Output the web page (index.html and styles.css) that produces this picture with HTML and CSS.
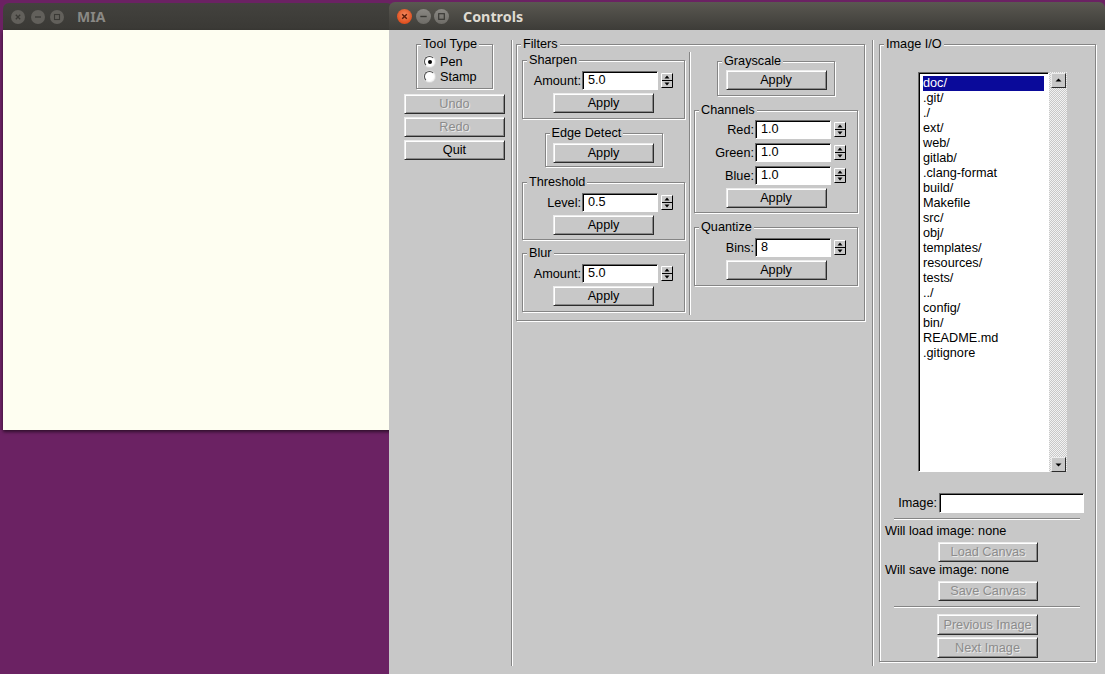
FILE: index.html
```html
<!DOCTYPE html>
<html>
<head>
<meta charset="utf-8">
<title>MIA Controls</title>
<link rel="stylesheet" href="styles.css">
</head>
<body>
<div class="desktop">
  <div class="window mia">
    <div class="titlebar">
      <div class="wbtns">
        <span class="wb"><svg width="14" height="14" viewBox="0 0 14 14"><path d="M4.8 4.8L9.2 9.2M9.2 4.8L4.8 9.2" stroke="#3a3935" stroke-width="1.3"/></svg></span>
        <span class="wb"><svg width="14" height="14" viewBox="0 0 14 14"><path d="M4 7H10" stroke="#3a3935" stroke-width="1.3"/></svg></span>
        <span class="wb"><svg width="14" height="14" viewBox="0 0 14 14"><rect x="4.5" y="4.5" width="5" height="5" fill="none" stroke="#3a3935" stroke-width="1.1"/></svg></span>
      </div>
      <span class="wtitle">MIA</span>
    </div>
    <div class="canvas"></div>
  </div>

  <div class="window controls">
    <div class="titlebar">
      <div class="wbtns">
        <span class="wb close"><svg width="15" height="15" viewBox="0 0 15 15"><path d="M5.2 5.2L9.8 9.8M9.8 5.2L5.2 9.8" stroke="#5a1a08" stroke-width="1.4"/></svg></span>
        <span class="wb"><svg width="15" height="15" viewBox="0 0 15 15"><path d="M4.3 7.5H10.7" stroke="#3a3935" stroke-width="1.4"/></svg></span>
        <span class="wb"><svg width="15" height="15" viewBox="0 0 15 15"><rect x="4.7" y="4.7" width="5.6" height="5.6" fill="none" stroke="#3a3935" stroke-width="1.2"/></svg></span>
      </div>
      <span class="wtitle">Controls</span>
    </div>

    <div class="panel">
      <div class="col-tools">
        <div class="group tooltype">
          <span class="legend">Tool Type</span>
          <div class="radio"><span class="rb on"></span>Pen</div>
          <div class="radio"><span class="rb"></span>Stamp</div>
        </div>
        <div class="btnstack">
          <div class="btn disabled">Undo</div>
          <div class="btn disabled">Redo</div>
          <div class="btn">Quit</div>
        </div>
      </div>

      <div class="vsep"></div>

      <div class="group filters">
        <span class="legend">Filters</span>
        <div class="fcol left">
          <div class="group sub sharpen">
            <span class="legend">Sharpen</span>
            <div class="field"><span class="flabel">Amount:</span><span class="input">5.0</span>
              <svg class="spin" width="12" height="15" viewBox="0 0 12 15"><rect width="12" height="15" fill="#c8c8c8"/><path d="M0.5 14.5V0.5H11.5" stroke="#fff" fill="none"/><path d="M0.5 14.5H11.5V0.5" stroke="#000" fill="none"/><path d="M1 7.5H11" stroke="#000"/><path d="M6 2.5L8.5 5.5H3.5Z" fill="#000"/><path d="M3.5 9.5H8.5L6 12.5Z" fill="#000"/></svg>
            </div>
            <div class="btn apply">Apply</div>
          </div>
          <div class="group sub edge">
            <span class="legend">Edge Detect</span>
            <div class="btn apply">Apply</div>
          </div>
          <div class="group sub threshold">
            <span class="legend">Threshold</span>
            <div class="field"><span class="flabel">Level:</span><span class="input">0.5</span>
              <svg class="spin" width="12" height="15" viewBox="0 0 12 15"><rect width="12" height="15" fill="#c8c8c8"/><path d="M0.5 14.5V0.5H11.5" stroke="#fff" fill="none"/><path d="M0.5 14.5H11.5V0.5" stroke="#000" fill="none"/><path d="M1 7.5H11" stroke="#000"/><path d="M6 2.5L8.5 5.5H3.5Z" fill="#000"/><path d="M3.5 9.5H8.5L6 12.5Z" fill="#000"/></svg>
            </div>
            <div class="btn apply">Apply</div>
          </div>
          <div class="group sub blur">
            <span class="legend">Blur</span>
            <div class="field"><span class="flabel">Amount:</span><span class="input">5.0</span>
              <svg class="spin" width="12" height="15" viewBox="0 0 12 15"><rect width="12" height="15" fill="#c8c8c8"/><path d="M0.5 14.5V0.5H11.5" stroke="#fff" fill="none"/><path d="M0.5 14.5H11.5V0.5" stroke="#000" fill="none"/><path d="M1 7.5H11" stroke="#000"/><path d="M6 2.5L8.5 5.5H3.5Z" fill="#000"/><path d="M3.5 9.5H8.5L6 12.5Z" fill="#000"/></svg>
            </div>
            <div class="btn apply">Apply</div>
          </div>
        </div>

        <div class="fsep"></div>

        <div class="fcol right">
          <div class="group sub gray">
            <span class="legend">Grayscale</span>
            <div class="btn apply">Apply</div>
          </div>
          <div class="group sub channels">
            <span class="legend">Channels</span>
            <div class="field"><span class="flabel">Red:</span><span class="input">1.0</span>
              <svg class="spin" width="12" height="15" viewBox="0 0 12 15"><rect width="12" height="15" fill="#c8c8c8"/><path d="M0.5 14.5V0.5H11.5" stroke="#fff" fill="none"/><path d="M0.5 14.5H11.5V0.5" stroke="#000" fill="none"/><path d="M1 7.5H11" stroke="#000"/><path d="M6 2.5L8.5 5.5H3.5Z" fill="#000"/><path d="M3.5 9.5H8.5L6 12.5Z" fill="#000"/></svg>
            </div>
            <div class="field"><span class="flabel">Green:</span><span class="input">1.0</span>
              <svg class="spin" width="12" height="15" viewBox="0 0 12 15"><rect width="12" height="15" fill="#c8c8c8"/><path d="M0.5 14.5V0.5H11.5" stroke="#fff" fill="none"/><path d="M0.5 14.5H11.5V0.5" stroke="#000" fill="none"/><path d="M1 7.5H11" stroke="#000"/><path d="M6 2.5L8.5 5.5H3.5Z" fill="#000"/><path d="M3.5 9.5H8.5L6 12.5Z" fill="#000"/></svg>
            </div>
            <div class="field"><span class="flabel">Blue:</span><span class="input">1.0</span>
              <svg class="spin" width="12" height="15" viewBox="0 0 12 15"><rect width="12" height="15" fill="#c8c8c8"/><path d="M0.5 14.5V0.5H11.5" stroke="#fff" fill="none"/><path d="M0.5 14.5H11.5V0.5" stroke="#000" fill="none"/><path d="M1 7.5H11" stroke="#000"/><path d="M6 2.5L8.5 5.5H3.5Z" fill="#000"/><path d="M3.5 9.5H8.5L6 12.5Z" fill="#000"/></svg>
            </div>
            <div class="btn apply">Apply</div>
          </div>
          <div class="group sub quantize">
            <span class="legend">Quantize</span>
            <div class="field"><span class="flabel">Bins:</span><span class="input">8</span>
              <svg class="spin" width="12" height="15" viewBox="0 0 12 15"><rect width="12" height="15" fill="#c8c8c8"/><path d="M0.5 14.5V0.5H11.5" stroke="#fff" fill="none"/><path d="M0.5 14.5H11.5V0.5" stroke="#000" fill="none"/><path d="M1 7.5H11" stroke="#000"/><path d="M6 2.5L8.5 5.5H3.5Z" fill="#000"/><path d="M3.5 9.5H8.5L6 12.5Z" fill="#000"/></svg>
            </div>
            <div class="btn apply">Apply</div>
          </div>
        </div>
      </div>

      <div class="vsep second"></div>

      <div class="group imageio">
        <span class="legend">Image I/O</span>
        <div class="browser">
          <div class="list">
            <div class="item sel">doc/</div>
            <div class="item">.git/</div>
            <div class="item">./</div>
            <div class="item">ext/</div>
            <div class="item">web/</div>
            <div class="item">gitlab/</div>
            <div class="item">.clang-format</div>
            <div class="item">build/</div>
            <div class="item">Makefile</div>
            <div class="item">src/</div>
            <div class="item">obj/</div>
            <div class="item">templates/</div>
            <div class="item">resources/</div>
            <div class="item">tests/</div>
            <div class="item">../</div>
            <div class="item">config/</div>
            <div class="item">bin/</div>
            <div class="item">README.md</div>
            <div class="item">.gitignore</div>
          </div>
          <div class="scrollbar">
            <div class="sbtn"><svg width="15" height="15" viewBox="0 0 15 15"><path d="M7.5 5.5L10.5 8.5H4.5Z" fill="#000"/></svg></div>
            <div class="sbtn"><svg width="15" height="15" viewBox="0 0 15 15"><path d="M4.5 6.5H10.5L7.5 9.5Z" fill="#000"/></svg></div>
          </div>
        </div>
        <div class="imgrow"><span class="imglabel">Image:</span><span class="input wide"></span></div>
        <div class="hsep"></div>
        <div class="note">Will load image: none</div>
        <div class="btn disabled io">Load Canvas</div>
        <div class="note tight">Will save image: none</div>
        <div class="btn disabled io">Save Canvas</div>
        <div class="hsep"></div>
        <div class="btn disabled io nav first">Previous Image</div>
        <div class="btn disabled io nav">Next Image</div>
      </div>
    </div>
  </div>
</div>
</body>
</html>
```

FILE: styles.css
```css
* { box-sizing: border-box; }

html, body {
  margin: 0;
  padding: 0;
}

body {
  width: 1105px;
  height: 674px;
  overflow: hidden;
  background: #6b2263;
  font-family: "Liberation Sans", Arial, sans-serif;
  font-size: 12.7px;
  color: #000;
}

.desktop {
  position: relative;
  width: 1105px;
  height: 674px;
  overflow: hidden;
}

.window { position: absolute; }

/* ---------- title bars ---------- */
.titlebar {
  display: flex;
  align-items: center;
  border-radius: 6px 6px 0 0;
}

.wbtns {
  display: flex;
  align-items: center;
}

.wb {
  display: flex;
  border-radius: 50%;
}

.wtitle {
  font-family: "Noto Sans", "Open Sans", sans-serif;
  font-weight: bold;
  font-size: 14.3px;
}

/* MIA window */
.mia {
  left: 3px;
  top: 3px;
  width: 390px;
}

.mia .titlebar {
  height: 27px;
  background: linear-gradient(#43423e, #3a3935);
  padding-left: 8px;
}

.mia .wb {
  width: 14px;
  height: 14px;
  background: #62605b;
  margin-right: 6px;
}
.mia .wb:nth-child(2) { margin-right: 5px; }
.mia .wb:last-child { margin-right: 0; }

.mia .wtitle {
  margin-left: 13px;
  color: #8a8985;
  font-size: 14px;
}

.canvas {
  height: 400px;
  background: #fefef1;
  box-shadow: 0 2px 3px rgba(0, 0, 0, 0.55);
}

/* Controls window */
.controls {
  left: 389px;
  top: 2px;
  width: 716px;
  height: 672px;
}

.controls .titlebar {
  height: 28px;
  background: linear-gradient(#5a5851, #3d3c38);
  padding-left: 8px;
}

.controls .wb {
  width: 15px;
  height: 15px;
  background: linear-gradient(#8a8883, #6e6c67);
  margin-right: 3px;
}
.controls .wb.close {
  background: radial-gradient(circle at 50% 40%, #f48a5f, #e0501f 70%, #c8431a);
  margin-right: 4px;
}
.controls .wb:last-child { margin-right: 0; }

.controls .wtitle {
  margin-left: 14px;
  color: #dfdbd2;
}

/* ---------- panel ---------- */
.panel {
  display: flex;
  align-items: flex-start;
  height: 644px;
  background: #c8c8c8;
}

.group {
  position: relative;
  border: 1px solid #858585;
  box-shadow: inset 1px 1px 0 #fff, 1px 1px 0 #fff;
}

.legend {
  position: absolute;
  top: -8px;
  left: 4px;
  padding: 0 2px;
  line-height: 14px;
  background: #c8c8c8;
  white-space: nowrap;
}

.vsep {
  flex: none;
  width: 2px;
  height: 626px;
  margin-top: 10px;
  border-left: 1px solid #858585;
  border-right: 1px solid #fff;
}

.vsep.second { margin-left: 7px; }

/* tool column */
.col-tools {
  flex: none;
  width: 122px;
  padding-top: 14px;
}

.tooltype {
  margin-left: 27px;
  width: 77px;
  height: 45px;
  padding: 9px 0 0 7px;
}

.radio {
  display: flex;
  align-items: center;
  height: 15px;
}

.rb {
  position: relative;
  width: 11px;
  height: 11px;
  margin-right: 5px;
  border-radius: 50%;
  background: #fff;
  border: 1px solid;
  border-color: #4a4a4a #f4f4f4 #f4f4f4 #4a4a4a;
  box-shadow: 0 0 0 1px #d8d8d8;
}

.rb.on::after {
  content: "";
  position: absolute;
  left: 2.5px;
  top: 2.5px;
  width: 4px;
  height: 4px;
  border-radius: 50%;
  background: #000;
}

.btnstack {
  margin: 5px 0 0 15px;
  width: 101px;
  display: flex;
  flex-direction: column;
  gap: 3px;
}

/* buttons */
.btn {
  height: 20px;
  display: flex;
  align-items: center;
  justify-content: center;
  background: #c8c8c8;
  border: 1px solid;
  border-color: #ececec #2c2c2c #2c2c2c #ececec;
  box-shadow: inset 1px 1px 0 #fff, inset -1px -1px 0 #8a8a8a;
  white-space: nowrap;
}

.btn.disabled {
  color: #8c8c8c;
  text-shadow: 1px 1px 0 #e9e9e9;
}

/* filters */
.filters {
  flex: none;
  display: flex;
  align-items: flex-start;
  margin: 14px 0 0 3px;
  width: 349px;
  height: 277px;
}

.fcol.left {
  margin-left: 5px;
  width: 163px;
}

.fsep {
  flex: none;
  width: 2px;
  height: 263px;
  margin: 7px 0 0 4px;
  border-left: 1px solid #858585;
  border-right: 1px solid #fff;
}

.fcol.right {
  margin-left: 3px;
  width: 164px;
}

.sub { padding-top: 10px; }

.sharpen { margin-top: 15px; height: 59px; }
.edge { margin: 14px auto 0; width: 118px; height: 34px; padding-top: 9px; }
.threshold { margin-top: 15px; height: 58px; }
.blur { margin-top: 13px; height: 59px; }

.gray { margin: 16px auto 0; width: 118px; height: 35px; padding-top: 8px; }
.channels { margin-top: 14px; height: 103px; padding-top: 9px; }
.quantize { margin-top: 14px; height: 59px; }

.field {
  display: flex;
  align-items: center;
  height: 19px;
}

.channels .field + .field { margin-top: 4px; }

.flabel {
  width: 58px;
  margin-right: 1px;
  text-align: right;
}

.fcol.right .flabel { width: 59px; }

.input {
  width: 76px;
  height: 19px;
  line-height: 17px;
  padding-left: 5px;
  background: #fff;
  border: 1px solid;
  border-color: #6a6a6a #fff #fff #6a6a6a;
  box-shadow: inset 1px 1px 0 #000;
}

.spin {
  display: block;
  margin-left: 3px;
  flex: none;
}

.apply {
  width: 101px;
  margin: 3px auto 0;
}

.edge .apply, .gray .apply { margin-top: 0; }

/* image i/o */
.imageio {
  flex: none;
  margin: 14px 0 0 5px;
  width: 217px;
  height: 618px;
}

.browser {
  display: flex;
  height: 400px;
  margin: 27px 0 0 38px;
}

.list {
  width: 131px;
  height: 400px;
  padding: 3px 0 0 4px;
  background: #fff;
  border: 1px solid;
  border-color: #6a6a6a #fff #fff #6a6a6a;
  box-shadow: inset 1px 1px 0 #000;
}

.item {
  width: 121px;
  height: 15px;
  line-height: 15px;
  white-space: nowrap;
}

.item.sel {
  background: #0a0a9a;
  color: #fff;
}

.scrollbar {
  width: 18px;
  height: 400px;
  padding: 1px 1px 0 2px;
  display: flex;
  flex-direction: column;
  justify-content: space-between;
  background: repeating-conic-gradient(#f2f2f2 0 25%, #c8c8c8 0 50%) 0 0 / 2px 2px;
}

.sbtn {
  width: 15px;
  height: 15px;
  display: flex;
  background: #c8c8c8;
  border: 1px solid;
  border-color: #ececec #2c2c2c #2c2c2c #ececec;
}
.sbtn svg { margin: -1px; }

.imgrow {
  display: flex;
  align-items: center;
  height: 20px;
  margin-top: 21px;
}

.imglabel {
  width: 57px;
  margin-right: 2px;
  text-align: right;
}

.input.wide {
  width: 145px;
  height: 20px;
}

.hsep {
  width: 186px;
  height: 2px;
  margin: 5px 0 0 14px;
  border-top: 1px solid #858585;
  border-bottom: 1px solid #fff;
}

.note {
  margin: 4px 0 0 5px;
  line-height: 15px;
}

.note.tight { margin-top: 1px; }

.btn.io {
  width: 100px;
  margin: 3px 0 0 58px;
}

.btn.nav {
  width: 101px;
  height: 21px;
  margin: 2px 0 0 57px;
}

.btn.nav.first { margin-top: 6px; }
```
